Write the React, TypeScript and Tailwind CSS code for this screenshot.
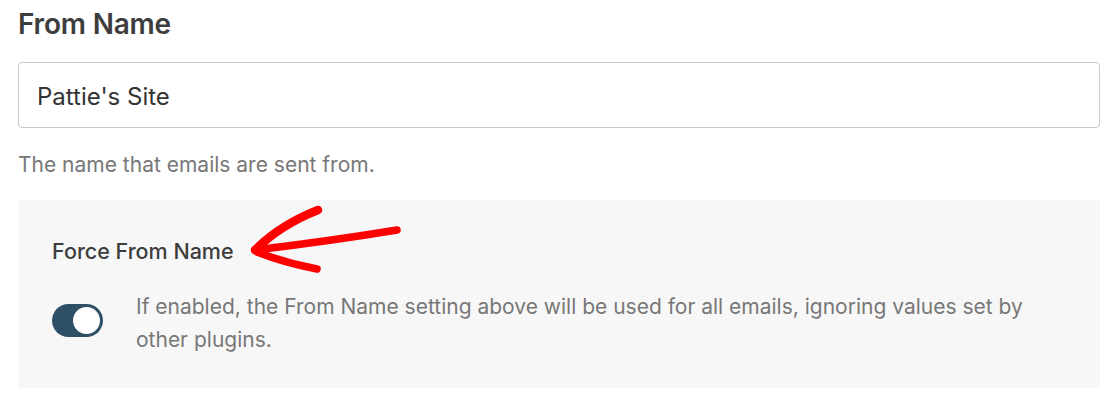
import React from "react";

const FONT = { fontFamily: "Inter, 'Noto Sans', sans-serif" };

const Arrow = () => (
  <svg
    className="absolute left-[240px] top-[195px] pointer-events-none"
    width="170"
    height="85"
    viewBox="0 0 170 85"
    fill="none"
  >
    <g stroke="#ff0000" strokeLinecap="round" strokeLinejoin="round">
      <path d="M15 55 Q 90 46 157 35" strokeWidth="7.5" />
      <path d="M15 55 Q 40 30 78 15" strokeWidth="8.5" />
      <path d="M17 57 Q 45 68 77 74" strokeWidth="7.5" />
    </g>
  </svg>
);

const Toggle = ({ on }: { on: boolean }) => (
  <div
    className={`w-[51px] h-[33px] shrink-0 rounded-full p-[3px] flex ${
      on ? "bg-[#2d5066] justify-end" : "bg-[#cccccc] justify-start"
    }`}
  >
    <div className="w-[27px] h-[27px] rounded-full bg-white" />
  </div>
);

export default function App() {
  return (
    <div
      className="relative w-[1116px] h-[402px] bg-white pl-[18px] pr-[16px] overflow-hidden"
      style={FONT}
    >
      <h2 className="pt-[7px] text-[28px] leading-[34px] font-semibold text-[#3d3d3d] tracking-[-0.2px]">
        From Name
      </h2>

      <div className="mt-[21px] h-[66px] border border-[#c9c9c9] rounded-[4px] flex items-center px-[18px] pt-[3px]">
        <span className="text-[24px] text-[#333]">Pattie's Site</span>
      </div>

      <p className="mt-[23px] text-[21px] leading-[28px] text-[#777]">
        The name that emails are sent from.
      </p>

      <div className="mt-[21px] h-[188px] bg-[#f7f7f7] px-[34px] pt-[37px]">
        <div className="text-[21.5px] leading-[28px] font-medium text-[#3d3d3d]">
          Force From Name
        </div>
        <div className="mt-[25px] flex gap-[33px]">
          <div className="pt-[14px]">
            <Toggle on />
          </div>
          <p className="max-w-[905px] text-[21px] leading-[33px] text-[#777]">
            If enabled, the From Name setting above will be used for all emails,
            ignoring values set by other plugins.
          </p>
        </div>
      </div>

      <Arrow />
    </div>
  );
}
